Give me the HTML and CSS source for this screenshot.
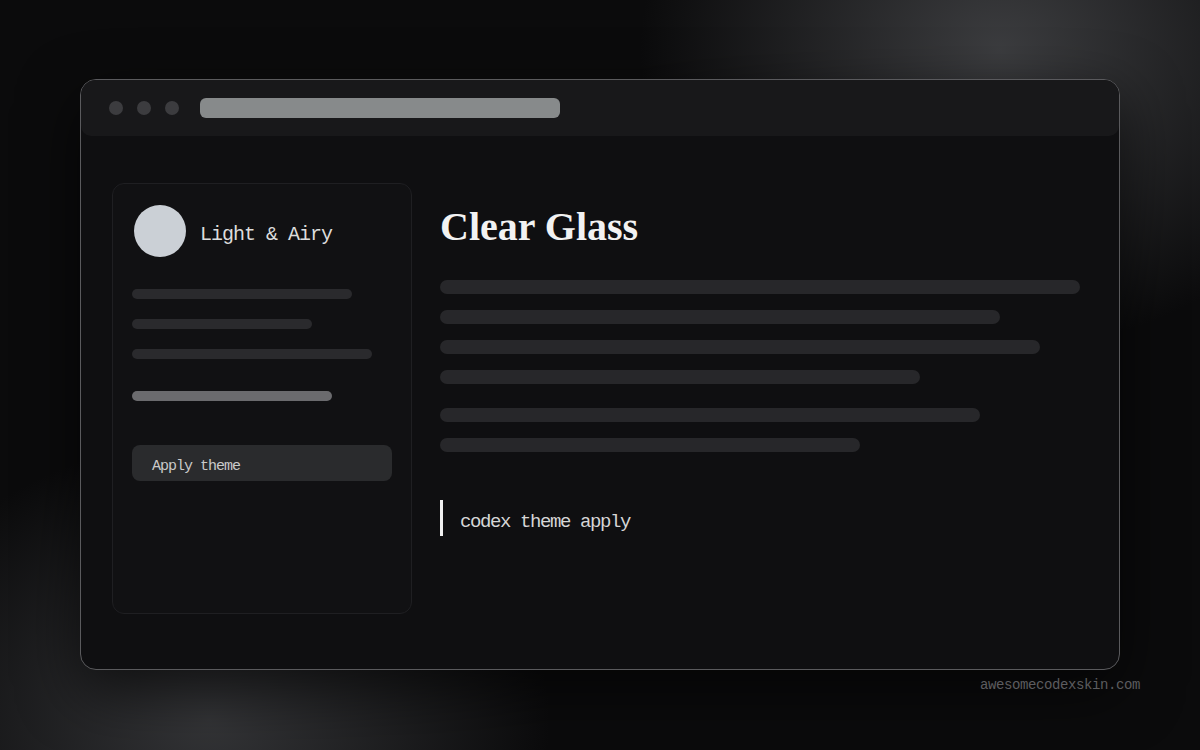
FILE: index.html
```html
<!DOCTYPE html>
<html>
<head>
<meta charset="utf-8">
<link rel="stylesheet" href="styles.css">
</head>
<body>
<div class="stage">
  <div class="window">
    <div class="titlebar">
      <span class="dot"></span><span class="dot"></span><span class="dot"></span>
      <div class="address"></div>
    </div>
    <div class="content">
      <aside class="sidebar">
        <div class="profile">
          <div class="avatar"></div>
          <div class="name">Light &amp; Airy</div>
        </div>
        <div class="sbars">
          <div class="sbar" style="width:220px"></div>
          <div class="sbar" style="width:180px"></div>
          <div class="sbar" style="width:240px"></div>
        </div>
        <div class="sbar light" style="width:200px"></div>
        <div class="btn">Apply theme</div>
      </aside>
      <main class="main">
        <h1 class="title">Clear Glass</h1>
        <div class="lines">
          <div class="line" style="width:640px"></div>
          <div class="line" style="width:560px"></div>
          <div class="line" style="width:600px"></div>
          <div class="line" style="width:480px"></div>
        </div>
        <div class="lines second">
          <div class="line" style="width:540px"></div>
          <div class="line" style="width:420px"></div>
        </div>
        <div class="code">codex theme apply</div>
      </main>
    </div>
  </div>
  <div class="footer">awesomecodexskin.com</div>
</div>
</body>
</html>
```

FILE: styles.css
```css
html, body {
  margin: 0;
  padding: 0;
  width: 1200px;
  height: 750px;
  overflow: hidden;
  background: #0b0b0c;
}
.stage {
  width: 1200px;
  height: 750px;
  box-sizing: border-box;
  padding: 79px 80px 0 80px;
  background:
    radial-gradient(ellipse 360px 300px at 1000px 50px, rgba(72,73,76,0.8), rgba(72,73,76,0) 100%),
    radial-gradient(ellipse 340px 280px at 210px 720px, rgba(62,63,66,0.8), rgba(62,63,66,0) 100%),
    #0b0b0c;
  font-family: "Liberation Mono", monospace;
}
.window {
  width: 1040px;
  height: 591px;
  box-sizing: border-box;
  border: 1px solid #5a5a5d;
  border-radius: 16px;
  background: #0f0f11;
  overflow: hidden;
  display: flex;
  flex-direction: column;
  box-shadow: 0 20px 60px rgba(0,0,0,0.6);
}
.titlebar {
  height: 56px;
  flex: none;
  background: #18181a;
  border-radius: 0 0 10px 10px;
  display: flex;
  align-items: center;
  padding-left: 28px;
  gap: 14px;
}
.dot {
  width: 14px;
  height: 14px;
  border-radius: 50%;
  background: #3c3c3f;
}
.address {
  width: 360px;
  height: 20px;
  border-radius: 6px;
  background: #878a8b;
  margin-left: 7px;
}
.content {
  display: flex;
  padding: 47px 40px 0 31px;
  gap: 28px;
}
.sidebar {
  width: 301px;
  height: 431px;
  box-sizing: border-box;
  border: 1px solid #1f1f22;
  border-radius: 12px;
  background: #111113;
  padding: 21px 19px 21px 21px;
  display: flex;
  flex-direction: column;
}
.sbars, .sbar.light, .btn {
  margin-left: -2px;
}
.profile {
  display: flex;
  align-items: center;
  gap: 14px;
}
.avatar {
  width: 52px;
  height: 52px;
  border-radius: 50%;
  background: #cbd0d6;
}
.name {
  font-family: "Liberation Mono", monospace;
  font-size: 20px;
  letter-spacing: -1px;
  color: #dcdcdc;
  padding-top: 7px;
}
.sbars {
  margin-top: 32px;
  display: flex;
  flex-direction: column;
  gap: 20px;
}
.sbar {
  height: 10px;
  border-radius: 5px;
  background: #2a2a2d;
}
.sbar.light {
  margin-top: 32px;
  background: #6b6b6e;
}
.btn {
  margin-top: 44px;
  width: 260px;
  height: 36px;
  box-sizing: border-box;
  border-radius: 8px;
  background: #2a2b2d;
  color: #c9c9c9;
  font-size: 15px;
  letter-spacing: -1px;
  display: flex;
  align-items: center;
  padding-left: 20px;
  padding-top: 7px;
}
.main {
  flex: 1;
  display: flex;
  flex-direction: column;
}
.title {
  margin: 20px 0 0 0;
  font-family: "Liberation Serif", serif;
  font-weight: bold;
  font-size: 40px;
  line-height: 48px;
  color: #f2f2f2;
}
.lines {
  margin-top: 29px;
  display: flex;
  flex-direction: column;
  gap: 16px;
}
.lines.second {
  margin-top: 24px;
}
.line {
  height: 14px;
  border-radius: 7px;
  background: #27272a;
}
.code {
  margin-top: 48px;
  height: 36px;
  box-sizing: border-box;
  border-left: 3px solid #f0f0f0;
  padding-left: 17px;
  padding-top: 8px;
  display: flex;
  align-items: center;
  font-size: 19px;
  letter-spacing: -1.4px;
  color: #d6d6d6;
}
.footer {
  width: 1060px;
  text-align: right;
  margin-top: 7px;
  font-size: 14px;
  letter-spacing: -0.4px;
  color: #5c5c5f;
}
```
